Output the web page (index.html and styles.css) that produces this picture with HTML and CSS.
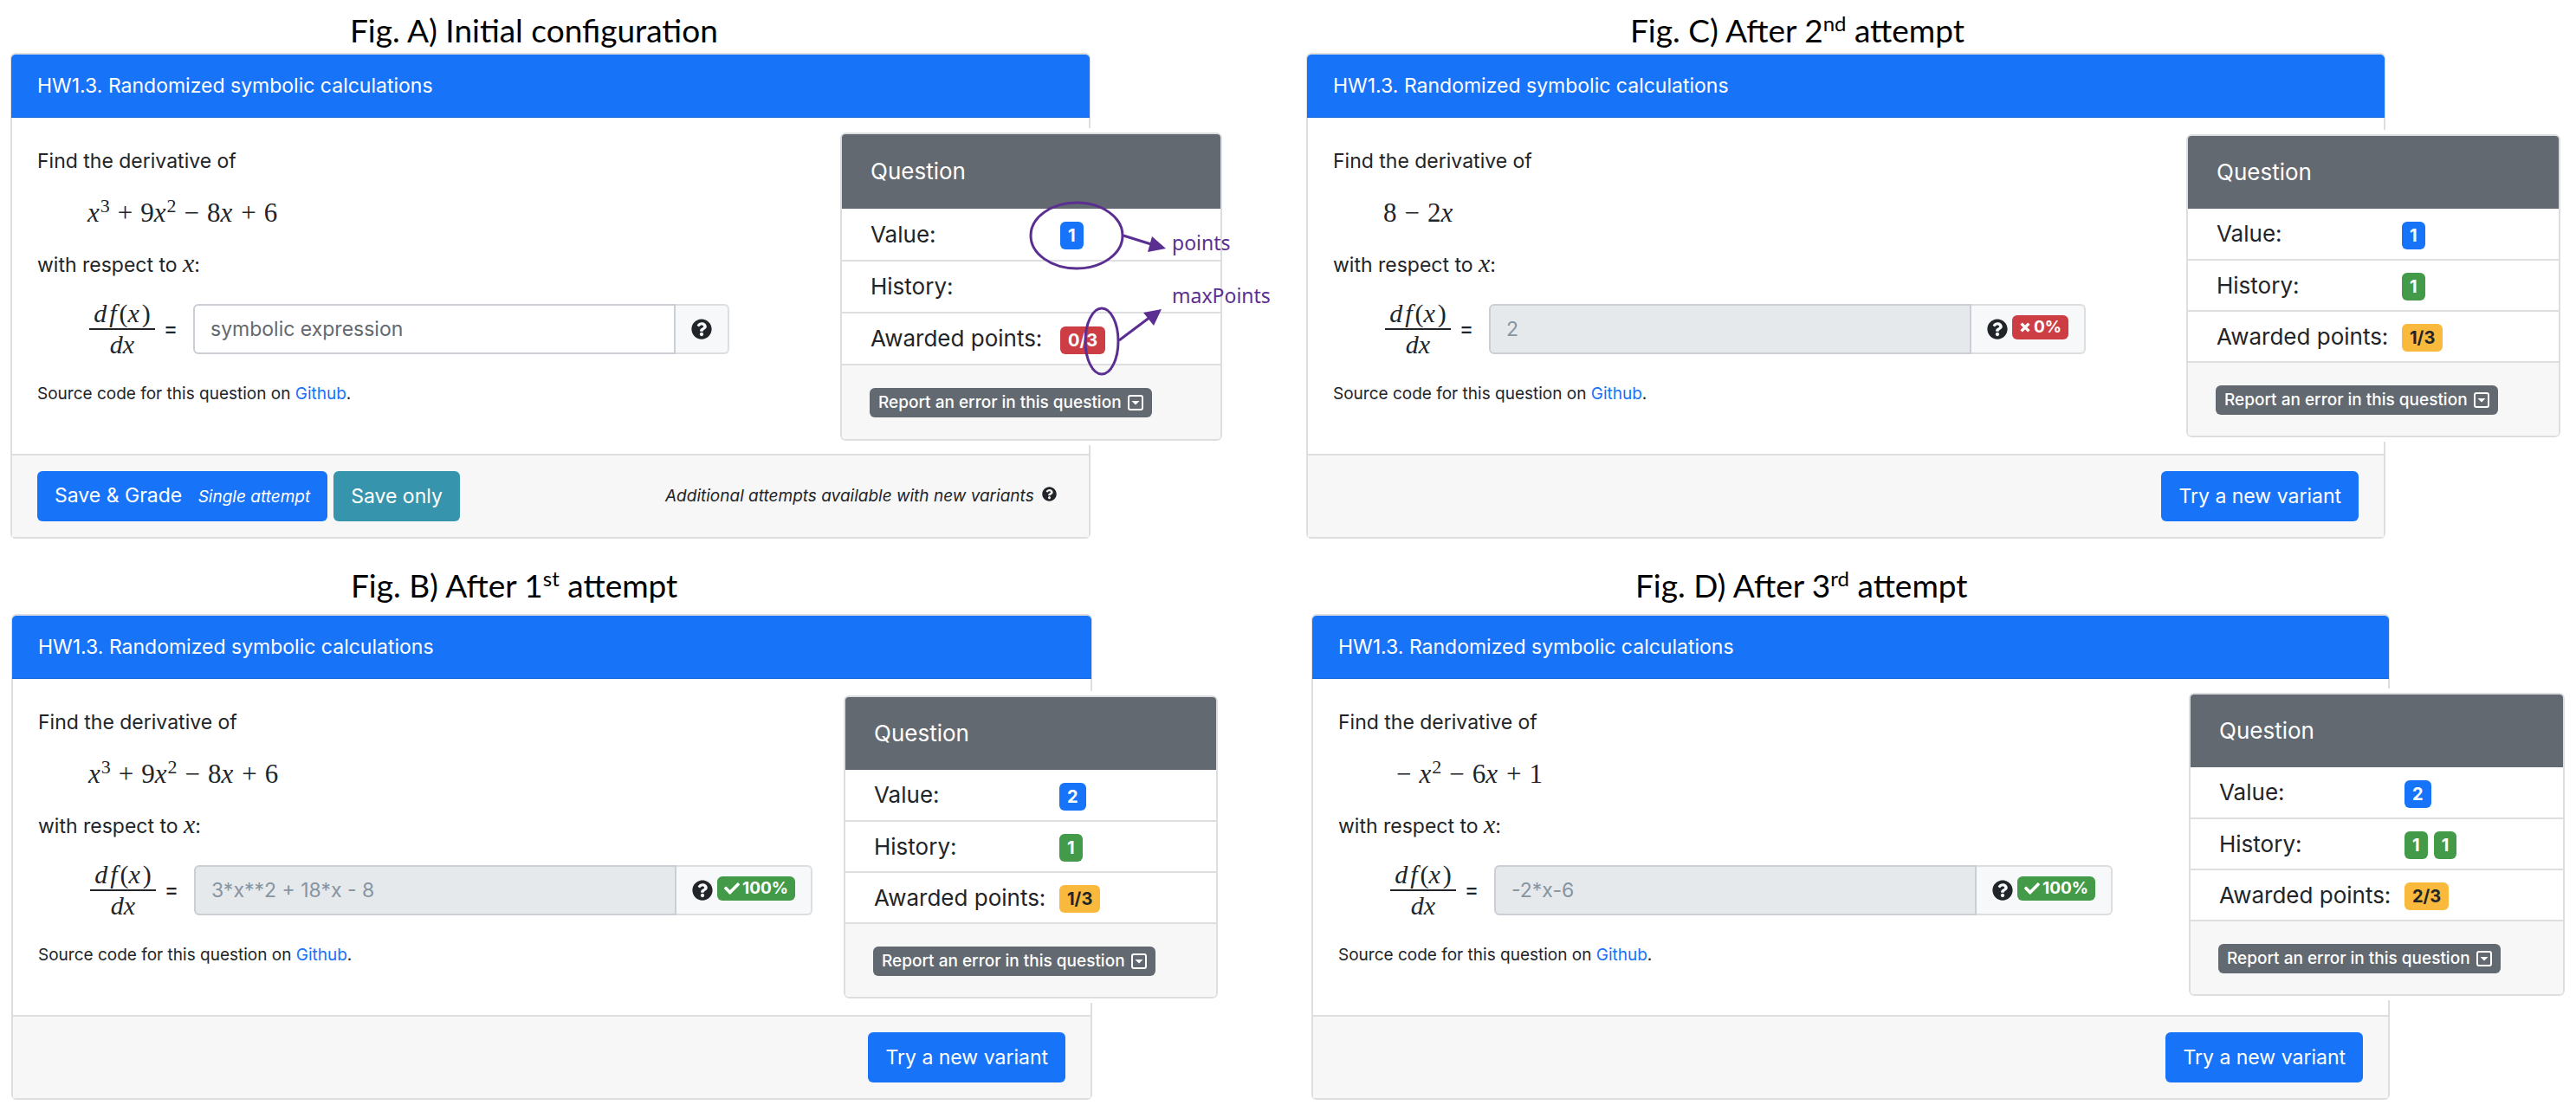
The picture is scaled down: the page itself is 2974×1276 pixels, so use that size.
FILE: index.html
```html
<!DOCTYPE html>
<html lang="en">
<head>
<meta charset="utf-8">
<title>HW1.3. Randomized symbolic calculations</title>
<link rel="stylesheet" href="styles.css">
</head>
<body>
<svg class="sprite" aria-hidden="true">
  <symbol id="help" viewBox="0 0 512 512"><path d="M504 256c0 136.997-111.043 248-248 248S8 392.997 8 256C8 119.083 119.043 8 256 8s248 111.083 248 248zM262.655 90c-54.497 0-89.255 22.957-116.549 63.758-3.536 5.286-2.353 12.415 2.715 16.258l34.699 26.31c5.205 3.947 12.621 3.008 16.665-2.122 17.864-22.658 30.113-35.797 57.303-35.797 20.429 0 45.698 13.148 45.698 32.958 0 14.976-12.363 22.667-32.534 33.976C247.128 238.528 216 254.941 216 296v4c0 6.627 5.373 12 12 12h56c6.627 0 12-5.373 12-12v-1.333c0-28.462 83.186-29.647 83.186-106.667 0-58.002-60.165-102-116.531-102zM256 338c-25.365 0-46 20.635-46 46 0 25.364 20.635 46 46 46s46-20.636 46-46c0-25.365-20.635-46-46-46z"/></symbol>
  <symbol id="check" viewBox="0 0 512 512"><path d="M173.898 439.404l-166.4-166.4c-9.997-9.997-9.997-26.206 0-36.204l36.203-36.204c9.997-9.998 26.207-9.998 36.204 0L192 312.69 432.095 72.596c9.997-9.997 26.207-9.997 36.204 0l36.203 36.204c9.997 9.997 9.997 26.206 0 36.204l-294.4 294.401c-9.998 9.997-26.207 9.997-36.204-.001z"/></symbol>
  <symbol id="cross" viewBox="0 0 16 16"><path d="M3 3l10 10M13 3L3 13" fill="none" stroke="currentColor" stroke-width="4"/></symbol>
  <symbol id="caret" viewBox="0 0 18 18"><rect x="1" y="1" width="16" height="16" rx="2" fill="none" stroke="currentColor" stroke-width="2"/><path d="M4.500 7h9L9 11.500z"/></symbol>
</svg>
<main class="figures">

  <section class="figure fig-a">
    <h2 class="caption">Fig. A) Initial configuration</h2>
    <div class="stage">
      <article class="card">
        <header class="card-header">HW1.3. Randomized symbolic calculations</header>
        <div class="card-body">
          <p class="line">Find the derivative of</p>
          <p class="math"><i>x</i><sup>3</sup><span class="op">+</span>9<i>x</i><sup>2</sup><span class="op">−</span>8<i>x</i><span class="op">+</span>6</p>
          <p class="line">with respect to <i class="var">x</i>:</p>
          <div class="answer">
            <label class="lhs" for="answer-a"><span class="fraction"><span class="num"><i>d</i><i>f</i>(<i>x</i>)</span><span class="den"><i>dx</i></span></span><span class="equals">=</span></label>
            <input class="answer-input" id="answer-a" type="text" placeholder="symbolic expression">
            <span class="addon"><svg class="icon-help"><use href="#help"/></svg></span>
          </div>
          <p class="source">Source code for this question on <a href="#">Github</a>.</p>
        </div>
        <footer class="card-footer">
          <button class="btn btn-primary" type="button">Save &amp; Grade <small>Single attempt</small></button>
          <button class="btn btn-info" type="button">Save only</button>
          <span class="attempts">Additional attempts available with new variants <svg class="icon-small"><use href="#help"/></svg></span>
        </footer>
      </article>
      <aside class="panel">
        <h3 class="panel-header">Question</h3>
        <table class="scores">
          <tr><th scope="row">Value:</th><td><span class="badge blue">1</span></td></tr>
          <tr><th scope="row">History:</th><td></td></tr>
          <tr><th scope="row">Awarded points:</th><td><span class="badge red">0/3</span></td></tr>
        </table>
        <footer class="panel-footer"><button class="report" type="button">Report an error in this question <svg class="icon-caret"><use href="#caret"/></svg></button></footer>
        <svg class="notes" viewBox="0 0 520 300" aria-hidden="true">
          <g fill="none" stroke="#5b2f91" stroke-width="3">
            <ellipse cx="273" cy="119" rx="53" ry="38"/>
            <ellipse cx="302" cy="241" rx="19" ry="38"/>
            <path d="M327 119l32 10M322 240l36-27"/>
          </g>
          <path fill="#5b2f91" d="M376 134l-21 4 5-18zM371 204l-9 19-12-15z"/>
        </svg>
        <span class="note note-points">points</span>
        <span class="note note-max">maxPoints</span>
      </aside>
    </div>
  </section>

  <section class="figure fig-c">
    <h2 class="caption">Fig. C) After 2<sup>nd</sup> attempt</h2>
    <div class="stage">
      <article class="card">
        <header class="card-header">HW1.3. Randomized symbolic calculations</header>
        <div class="card-body">
          <p class="line">Find the derivative of</p>
          <p class="math">8<span class="op">−</span>2<i>x</i></p>
          <p class="line">with respect to <i class="var">x</i>:</p>
          <div class="answer">
            <label class="lhs" for="answer-c"><span class="fraction"><span class="num"><i>d</i><i>f</i>(<i>x</i>)</span><span class="den"><i>dx</i></span></span><span class="equals">=</span></label>
            <input class="answer-input" id="answer-c" type="text" value="2" disabled>
            <span class="addon"><svg class="icon-help"><use href="#help"/></svg><span class="result red"><svg class="icon-cross"><use href="#cross"/></svg>0%</span></span>
          </div>
          <p class="source">Source code for this question on <a href="#">Github</a>.</p>
        </div>
        <footer class="card-footer"><button class="btn btn-primary btn-next" type="button">Try a new variant</button></footer>
      </article>
      <aside class="panel">
        <h3 class="panel-header">Question</h3>
        <table class="scores">
          <tr><th scope="row">Value:</th><td><span class="badge blue">1</span></td></tr>
          <tr><th scope="row">History:</th><td><span class="badge green">1</span></td></tr>
          <tr><th scope="row">Awarded points:</th><td><span class="badge yellow">1/3</span></td></tr>
        </table>
        <footer class="panel-footer"><button class="report" type="button">Report an error in this question <svg class="icon-caret"><use href="#caret"/></svg></button></footer>
      </aside>
    </div>
  </section>

  <section class="figure fig-b">
    <h2 class="caption">Fig. B) After 1<sup>st</sup> attempt</h2>
    <div class="stage">
      <article class="card">
        <header class="card-header">HW1.3. Randomized symbolic calculations</header>
        <div class="card-body">
          <p class="line">Find the derivative of</p>
          <p class="math"><i>x</i><sup>3</sup><span class="op">+</span>9<i>x</i><sup>2</sup><span class="op">−</span>8<i>x</i><span class="op">+</span>6</p>
          <p class="line">with respect to <i class="var">x</i>:</p>
          <div class="answer">
            <label class="lhs" for="answer-b"><span class="fraction"><span class="num"><i>d</i><i>f</i>(<i>x</i>)</span><span class="den"><i>dx</i></span></span><span class="equals">=</span></label>
            <input class="answer-input" id="answer-b" type="text" value="3*x**2 + 18*x - 8" disabled>
            <span class="addon"><svg class="icon-help"><use href="#help"/></svg><span class="result green"><svg class="icon-check"><use href="#check"/></svg>100%</span></span>
          </div>
          <p class="source">Source code for this question on <a href="#">Github</a>.</p>
        </div>
        <footer class="card-footer"><button class="btn btn-primary btn-next" type="button">Try a new variant</button></footer>
      </article>
      <aside class="panel">
        <h3 class="panel-header">Question</h3>
        <table class="scores">
          <tr><th scope="row">Value:</th><td><span class="badge blue">2</span></td></tr>
          <tr><th scope="row">History:</th><td><span class="badge green">1</span></td></tr>
          <tr><th scope="row">Awarded points:</th><td><span class="badge yellow">1/3</span></td></tr>
        </table>
        <footer class="panel-footer"><button class="report" type="button">Report an error in this question <svg class="icon-caret"><use href="#caret"/></svg></button></footer>
      </aside>
    </div>
  </section>

  <section class="figure fig-d">
    <h2 class="caption">Fig. D) After 3<sup>rd</sup> attempt</h2>
    <div class="stage">
      <article class="card">
        <header class="card-header">HW1.3. Randomized symbolic calculations</header>
        <div class="card-body">
          <p class="line">Find the derivative of</p>
          <p class="math"><span class="op">−</span><i>x</i><sup>2</sup><span class="op">−</span>6<i>x</i><span class="op">+</span>1</p>
          <p class="line">with respect to <i class="var">x</i>:</p>
          <div class="answer">
            <label class="lhs" for="answer-d"><span class="fraction"><span class="num"><i>d</i><i>f</i>(<i>x</i>)</span><span class="den"><i>dx</i></span></span><span class="equals">=</span></label>
            <input class="answer-input" id="answer-d" type="text" value="-2*x-6" disabled>
            <span class="addon"><svg class="icon-help"><use href="#help"/></svg><span class="result green"><svg class="icon-check"><use href="#check"/></svg>100%</span></span>
          </div>
          <p class="source">Source code for this question on <a href="#">Github</a>.</p>
        </div>
        <footer class="card-footer"><button class="btn btn-primary btn-next" type="button">Try a new variant</button></footer>
      </article>
      <aside class="panel">
        <h3 class="panel-header">Question</h3>
        <table class="scores">
          <tr><th scope="row">Value:</th><td><span class="badge blue">2</span></td></tr>
          <tr><th scope="row">History:</th><td><span class="badge green">1</span><span class="badge green">1</span></td></tr>
          <tr><th scope="row">Awarded points:</th><td><span class="badge yellow">2/3</span></td></tr>
        </table>
        <footer class="panel-footer"><button class="report" type="button">Report an error in this question <svg class="icon-caret"><use href="#caret"/></svg></button></footer>
      </aside>
    </div>
  </section>

</main>
</body>
</html>
```
FILE: styles.css
```css
:root {
  --blue: #1773f8;
  --green: #439a48;
  --red: #cc3e44;
  --yellow: #f8b93c;
  --teal: #3794ad;
  --gray: #626970;
  --ink: #212529;
  --edge: #dcdedf;
  --purple: #5b2f91;
}
* { box-sizing: border-box; }
body {
  margin: 0;
  background: #fff;
  color: var(--ink);
  font: 23px/36px Inter, "Liberation Sans", sans-serif;
}
p, h2, h3 { margin: 0; font-weight: 400; }
a { color: var(--blue); text-decoration: none; }
button, input { font: inherit; margin: 0; }
svg { fill: currentColor; }
.sprite { position: absolute; width: 0; height: 0; }

.figures {
  display: grid;
  grid-template-columns: 1496fr 1453fr;
  padding: 0 13px 0 12px;
}
.figure {
  --panel-top: 94px;
  --panel-pad: 24px;
  --label: 247px;
  --row: 59px;
}
.fig-a {
  --overhang: 152px; --panel: 441px;
  --panel-top: 92px; --panel-pad: 25px; --label: 252px; --row: 60px;
  margin-right: 97px;
}
.fig-b { --overhang: 145px; --panel: 432px; margin: 19px 102px 0 1px; }
.fig-c { --overhang: 202px; --panel: 432px; margin-right: 5px; }
.fig-d { --overhang: 202px; --panel: 434px; --panel-top: 91px; margin: 19px 0 0 6px; }

.caption {
  padding: 11px 0 2px 392px;
  color: #000;
  font: 37px/48px Lato, sans-serif;
}
.fig-c .caption, .fig-d .caption { padding-left: 374px; }
.fig-b .caption, .fig-d .caption { padding-bottom: 9px; }
.caption sup { font-size: 24px; line-height: 0; vertical-align: 13px; }

.stage { position: relative; }
.card {
  margin-right: var(--overhang);
  border: 2px solid var(--edge);
  border-radius: 6px;
}
.card-header {
  margin: 0 -1px;
  padding: 18px 30px;
  border-bottom: 1px solid #1767dc;
  border-radius: 5px 5px 0 0;
  background: var(--blue);
  color: #fff;
}
.card-body { padding: 32px 29px 51px; }
.line { line-height: 36px; }
.var, .math { font-family: "Liberation Serif", serif; }
.var { font-size: 30px; line-height: 24px; }
.math { padding: 24px 0 24px 58px; font-size: 31px; }
.math i { margin-right: 1px; }
.math sup { font-size: 22px; line-height: 0; vertical-align: 11px; }
.op { margin: 0 9px; }

.answer { display: flex; align-items: center; margin-top: 21px; padding-left: 60px; }
.lhs { display: flex; align-items: center; gap: 10px; width: 120px; font-size: 24px; }
.fraction { width: 76px; font: 30px/34px "Liberation Serif", serif; text-align: center; }
.num, .den { display: block; }
.num { border-bottom: 2px solid var(--ink); }
.num i { margin-right: 3px; }
.equals { font-weight: 500; }
.answer-input {
  width: 557px;
  height: 58px;
  padding: 0 18px;
  border: 2px solid #c9cfd5;
  border-radius: 6px 0 0 6px;
  background: #fff;
  color: #8794a2;
}
.answer-input::placeholder { color: var(--gray); }
.answer-input:disabled { background: #e5e9ec; }
.addon {
  display: flex;
  align-items: center;
  height: 58px;
  padding: 0 18px;
  gap: 5px;
  border: 2px solid var(--edge);
  border-left: 0;
  border-radius: 0 6px 6px 0;
  background: #f7f8fa;
}
.icon-help { width: 24px; height: 24px; }
.result, .badge {
  display: inline-flex;
  align-items: center;
  border-radius: 6px;
  color: #fff;
  font-weight: 700;
}
.result { height: 28px; margin-bottom: 4px; padding: 0 8px; gap: 3px; font-size: 19px; }
.icon-check { width: 18px; height: 18px; }
.icon-cross { width: 14px; height: 18px; }
.blue { background: var(--blue); }
.green { background: var(--green); }
.red { background: var(--red); }
.yellow { background: var(--yellow); color: var(--ink); }
.source { margin-top: 22px; font-size: 19px; }

.card-footer {
  display: flex;
  align-items: center;
  gap: 7px;
  padding: 18px 29px;
  border-top: 2px solid var(--edge);
  background: #f7f7f7;
}
.btn {
  height: 58px;
  padding: 0 20px;
  border: 0;
  border-radius: 6px;
  color: #fff;
}
.btn-primary { background: var(--blue); }
.btn-info { background: var(--teal); }
.btn-next { margin-left: auto; }
.btn small { margin-left: 12px; font-size: 19px; font-style: italic; }
.attempts { margin: 0 8px 0 auto; font-size: 19px; font-style: italic; }
.icon-small { width: 17px; height: 17px; margin-left: 4px; }

/* The score panel lies over the right edge of the card. */
.panel {
  position: absolute;
  top: var(--panel-top);
  right: 0;
  width: var(--panel);
  border: 2px solid var(--edge);
  border-radius: 6px;
  outline: 5px solid #fff;
  background: #fff;
  font-size: 26px;
}
.panel-header {
  padding: var(--panel-pad) 33px;
  border-radius: 4px 4px 0 0;
  background: var(--gray);
  color: #fff;
  font-size: 26px;
}
.scores { width: 100%; border-collapse: collapse; }
.scores th, .scores td { height: var(--row); padding: 0; border-bottom: 2px solid var(--edge); font-weight: 400; text-align: left; }
.scores th { width: var(--label); padding-left: 33px; }
.badge { height: 32px; margin-right: 7px; padding: 0 9px; font-size: 20px; vertical-align: middle; }
.panel-footer { display: flex; padding: 26px 32px var(--panel-pad); background: #f7f7f7; border-radius: 0 0 4px 4px; }
.report {
  display: flex;
  align-items: center;
  gap: 7px;
  height: 34px;
  padding: 0 10px;
  border: 0;
  border-radius: 6px;
  background: var(--gray);
  color: #fff;
  font-size: 19px;
  font-weight: 500;
  white-space: nowrap;
}
.icon-caret { width: 18px; height: 18px; }

/* Hand-drawn callouts on top of the first panel. */
.notes { position: absolute; top: -2px; left: -2px; width: 520px; height: 300px; }
.note { position: absolute; left: 381px; color: var(--purple); font: 23px/30px "Noto Sans", sans-serif; }
.note-points { top: 110px; }
.note-max { top: 171px; }
```
